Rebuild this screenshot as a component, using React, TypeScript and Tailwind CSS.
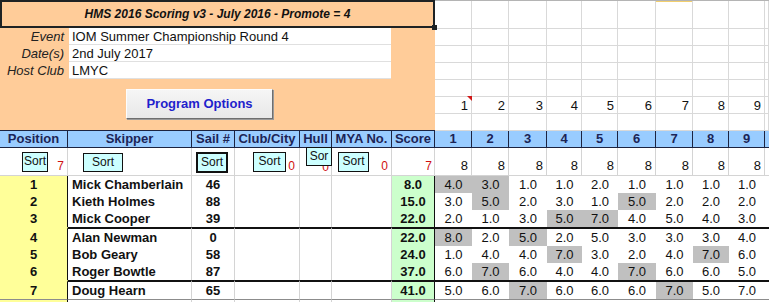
const rows = [
  { pos: 1, name: 'Mick Chamberlain', sail: '46', score: '8.0', r: [4, 3, 1, 1, 2, 1, 1, 1, 1], g: [0, 1], thick: false },
  { pos: 2, name: 'Kieth Holmes', sail: '88', score: '15.0', r: [3, 5, 2, 3, 1, 5, 2, 2, 2], g: [1, 5], thick: false },
  { pos: 3, name: 'Mick Cooper', sail: '39', score: '22.0', r: [2, 1, 3, 5, 7, 4, 5, 4, 3], g: [3, 4], thick: false },
  { pos: 4, name: 'Alan Newman', sail: '0', score: '22.0', r: [8, 2, 5, 2, 5, 3, 3, 3, 4], g: [0, 2], thick: true },
  { pos: 5, name: 'Bob Geary', sail: '58', score: '24.0', r: [1, 4, 4, 7, 3, 2, 4, 7, 6], g: [3, 7], thick: false },
  { pos: 6, name: 'Roger Bowtle', sail: '87', score: '37.0', r: [6, 7, 6, 4, 4, 7, 6, 6, 5], g: [1, 5], thick: false },
  { pos: 7, name: 'Doug Hearn', sail: '65', score: '41.0', r: [5, 6, 7, 6, 6, 6, 7, 5, 7], g: [2, 6], thick: true },
];

const heads = ['Position', 'Skipper', 'Sail #', 'Club/City', 'Hull', 'MYA No.', 'Score', '1', '2', '3', '4', '5', '6', '7', '8', '9'];
const races = [1, 2, 3, 4, 5, 6, 7, 8, 9];

const info = [
  ['Event', 'IOM Summer Championship Round 4'],
  ['Date(s)', '2nd July 2017'],
  ['Host Club', 'LMYC'],
];

function SortBtn({ className, label = 'Sort' }: { className: string; label?: string }) {
  return (
    <div
      className={`absolute flex justify-center bg-[#ccffff] border border-[#111] text-[12px] leading-[17px] text-[#111] overflow-hidden ${className}`}
    >
      {label}
    </div>
  );
}

export default function App() {
  return (
    <div className="w-[769px] h-[302px] overflow-hidden bg-white font-['Liberation_Sans',Arial,sans-serif] text-[#111]">
      {/* top panel */}
      <div className="flex h-[130px]">
        <div className="w-[435px] shrink-0 bg-[#ffcc99] flex flex-col">
          <div className="relative h-[28px] border-2 border-[#1e2224] flex items-center justify-center text-[12px] font-bold italic">
            HMS 2016 Scoring v3 - July 2016 - Promote = 4
            <span className="absolute -right-[4px] -bottom-[4px] w-[5px] h-[5px] bg-[#1e2224] z-10" />
          </div>
          {info.map(([label, value]) => (
            <div key={label} className="flex h-[17px]">
              <div className="w-[69px] pr-[5px] text-right italic text-[13px] leading-[17px] text-[#222]">{label}</div>
              <div className="w-[322px] bg-white pl-[3px] pt-[1px] text-[13px] leading-[15px] border-b border-[#e0e0e0]">
                {value}
              </div>
            </div>
          ))}
          <div className="ml-[126px] mt-[10px] w-[147px] h-[30px] flex items-center justify-center bg-gradient-to-b from-[#f6f6f6] to-[#e8e8e8] border border-t-[#fdfdfd] border-l-[#fdfdfd] border-r-[#6e6e6e] border-b-[#6e6e6e] shadow-[1px_1px_0_#9a9a9a] text-[13px] font-bold text-[#1f1fcc]">
            Program Options
          </div>
        </div>
        <div className="flex-1 grid grid-cols-[37px_37px_38px_35px_36px_38px_37px_36px_36px_4px] grid-rows-[28px_17px_17px_17px_17px_17px_17px] border-t border-[#b4b4b4]">
          {Array.from({ length: 70 }).map((_, i) => {
            const row = Math.floor(i / 10);
            const col = i % 10;
            const isNum = row === 5 && col < 9;
            return (
              <div
                key={i}
                className={`relative border-b border-r border-[#d9d9d9] flex items-center justify-end pr-[3px] text-[13px] leading-none ${
                  row === 0 && col === 6 ? 'shadow-[inset_0_1px_0_#f2cf6e]' : ''
                }`}
              >
                {isNum ? races[col] : ''}
                {isNum && col === 0 && (
                  <span className="absolute -top-px -right-px w-0 h-0 border-t-[5px] border-l-[5px] border-t-[#d01818] border-l-transparent" />
                )}
              </div>
            );
          })}
        </div>
      </div>

      {/* results table */}
      <div className="grid grid-cols-[68px_124px_43px_65px_32px_60px_43px_37px_37px_38px_35px_36px_38px_37px_36px_36px_4px]">
        {heads.map((h) => (
          <div
            key={h}
            className="h-[18px] bg-[#99ccff] border-y border-r border-[#1c2340] flex items-center justify-center text-[13px] font-bold text-[#1c2456] whitespace-nowrap overflow-hidden"
          >
            {h}
          </div>
        ))}
        <div className="h-[18px] bg-[#99ccff] border-y border-[#1c2340]" />

        {/* sort row */}
        <div className="relative h-[28px] border-r border-b border-[#d4d4d4] flex items-end justify-end pr-[3px] pb-[3px] text-[12px] leading-none text-[#d01010]">
          7
          <SortBtn className="left-[22px] top-[4px] w-[26px] h-[20px]" />
        </div>
        <div className="relative h-[28px] border-r border-b border-[#d4d4d4]">
          <SortBtn className="left-[15px] top-[5px] w-[40px] h-[19px]" />
        </div>
        <div className="relative h-[28px] border-r border-b border-[#d4d4d4]">
          <SortBtn className="left-[4px] top-[4px] w-[32px] h-[21px] border-2" />
        </div>
        <div className="relative h-[28px] border-r border-b border-[#d4d4d4] flex items-end justify-end pr-[4px] pb-[3px] text-[12px] leading-none text-[#d01010]">
          0
          <SortBtn className="left-[18px] top-[4px] w-[33px] h-[20px]" />
        </div>
        <div className="relative h-[28px] border-r border-b border-[#d4d4d4] flex items-end justify-end pr-[2px] pb-[2px] text-[12px] leading-none text-[#d01010]">
          0
          <SortBtn className="left-[6px] -top-px w-[26px] h-[19px] leading-[15px]" label="Sor" />
        </div>
        <div className="relative h-[28px] border-r border-b border-[#d4d4d4] flex items-end justify-end pr-[3px] pb-[3px] text-[12px] leading-none text-[#d01010]">
          0
          <SortBtn className="left-[6px] top-[4px] w-[31px] h-[20px]" />
        </div>
        <div className="h-[28px] border-r border-b border-[#d4d4d4] flex items-end justify-end pr-[2px] pb-[3px] text-[12px] leading-none text-[#d01010]">
          7
        </div>
        {races.map((r) => (
          <div
            key={r}
            className="h-[28px] border-r border-b border-[#d4d4d4] flex items-end justify-end pr-[3px] pb-[3px] text-[13px] leading-none"
          >
            8
          </div>
        ))}
        <div className="h-[28px] border-b border-[#d4d4d4]" />

        {/* data rows */}
        {rows.map((row) => {
          const top = row.thick ? 'border-t-2 border-t-[#111]' : '';
          const last = row.pos === 7 ? 'border-b border-b-[#8c8c8c]' : '';
          return [
            <div
              key={`p${row.pos}`}
              className={`h-full bg-[#ffff99] border-r border-r-[#111] flex items-center justify-center text-[13px] font-bold leading-[17px] ${
                row.thick ? 'border-t-2 border-t-[#ffff99]' : ''
              } ${last}`}
            >
              {row.pos}
            </div>,
            <div
              key={`n${row.pos}`}
              className={`h-full pl-[4px] border-r border-r-[#d4d4d4] flex items-center text-[13px] font-bold leading-[17px] whitespace-nowrap ${top} ${last}`}
            >
              {row.name}
            </div>,
            <div
              key={`s${row.pos}`}
              className={`h-full border-r border-r-[#d4d4d4] flex items-center justify-center text-[13px] font-bold leading-[17px] ${top} ${last}`}
            >
              {row.sail}
            </div>,
            <div key={`c${row.pos}`} className={`h-full border-r border-r-[#d4d4d4] ${top} ${last}`} />,
            <div key={`h${row.pos}`} className={`h-full border-r border-r-[#d4d4d4] ${top} ${last}`} />,
            <div key={`m${row.pos}`} className={`h-full border-r border-r-[#d4d4d4] ${top} ${last}`} />,
            <div
              key={`t${row.pos}`}
              className={`h-full bg-[#ccffcc] border-r border-r-[#111] flex items-center justify-center text-[13px] font-bold leading-[17px] ${top} ${last}`}
            >
              {row.score}
            </div>,
            ...row.r.map((v, i) => (
              <div
                key={`r${row.pos}-${i}`}
                className={`h-full flex items-center justify-center text-[13px] leading-[17px] ${
                  row.g.includes(i) ? 'bg-[#c0c0c0]' : 'bg-white'
                } ${top} ${last}`}
              >
                {v.toFixed(1)}
              </div>
            )),
            <div key={`e${row.pos}`} className={`h-full ${top} ${last}`} />,
          ];
        })}

        {/* partial row 8 */}
        <div className="h-[10px] bg-[#ffff99] border-r border-r-[#111]" />
        <div className="h-[10px] border-r border-r-[#d4d4d4]" />
        <div className="h-[10px] border-r border-r-[#d4d4d4]" />
        <div className="h-[10px] border-r border-r-[#d4d4d4]" />
        <div className="h-[10px] border-r border-r-[#d4d4d4]" />
        <div className="h-[10px] border-r border-r-[#d4d4d4]" />
        <div className="h-[10px] bg-[#ccffcc] border-r border-r-[#111]" />
      </div>
    </div>
  );
}
